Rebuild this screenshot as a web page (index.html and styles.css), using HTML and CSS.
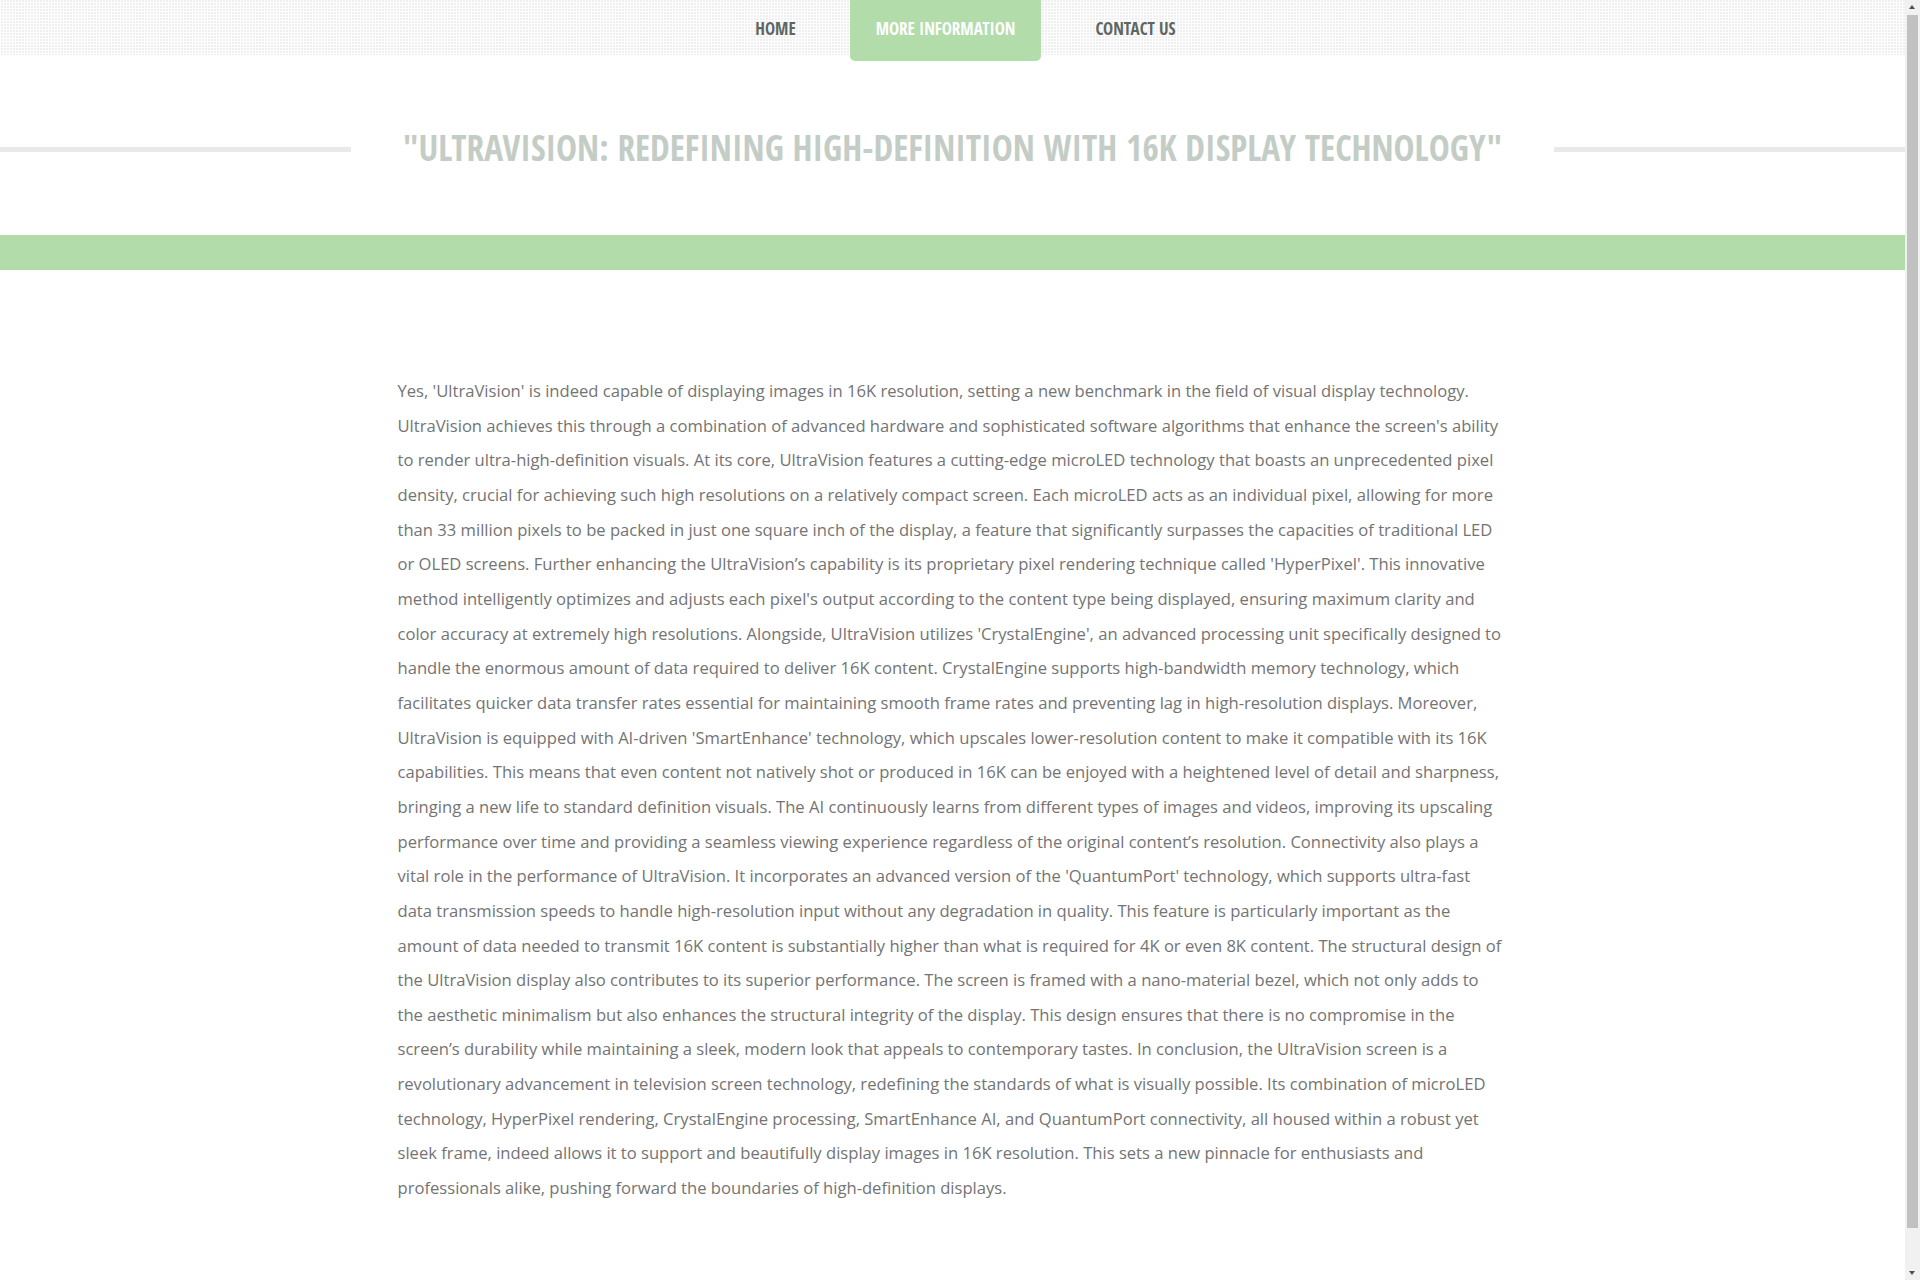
FILE: index.html
```html
<!DOCTYPE html>
<html lang="en">
<head>
<meta charset="utf-8">
<title>UltraVision</title>
<link rel="stylesheet" href="styles.css">
</head>
<body>
<div class="page">
  <header class="topbar">
    <nav class="menu">
      <a class="menu-item" href="#">Home</a>
      <a class="menu-item is-active" href="#">More Information</a>
      <a class="menu-item" href="#">Contact Us</a>
    </nav>
  </header>

  <section class="headline">
    <span class="headline-rule"></span>
    <h1 class="headline-title">"UltraVision: Redefining High-Definition with 16K Display Technology"</h1>
    <span class="headline-rule"></span>
  </section>

  <div class="band"></div>

  <main class="content">
    <p class="article">Yes, 'UltraVision' is indeed capable of displaying images in 16K resolution, setting a new benchmark in the field of visual display technology. UltraVision achieves this through a combination of advanced hardware and sophisticated software algorithms that enhance the screen's ability to render ultra-high-definition visuals. At its core, UltraVision features a cutting-edge microLED technology that boasts an unprecedented pixel density, crucial for achieving such high resolutions on a relatively compact screen. Each microLED acts as an individual pixel, allowing for more than 33 million pixels to be packed in just one square inch of the display, a feature that significantly surpasses the capacities of traditional LED or OLED screens. Further enhancing the UltraVision’s capability is its proprietary pixel rendering technique called 'HyperPixel'. This innovative method intelligently optimizes and adjusts each pixel's output according to the content type being displayed, ensuring maximum clarity and color accuracy at extremely high resolutions. Alongside, UltraVision utilizes 'CrystalEngine', an advanced processing unit specifically designed to handle the enormous amount of data required to deliver 16K content. CrystalEngine supports high-bandwidth memory technology, which facilitates quicker data transfer rates essential for maintaining smooth frame rates and preventing lag in high-resolution displays. Moreover, UltraVision is equipped with AI-driven 'SmartEnhance' technology, which upscales lower-resolution content to make it compatible with its 16K capabilities. This means that even content not natively shot or produced in 16K can be enjoyed with a heightened level of detail and sharpness, bringing a new life to standard definition visuals. The AI continuously learns from different types of images and videos, improving its upscaling performance over time and providing a seamless viewing experience regardless of the original content’s resolution. Connectivity also plays a vital role in the performance of UltraVision. It incorporates an advanced version of the 'QuantumPort' technology, which supports ultra-fast data transmission speeds to handle high-resolution input without any degradation in quality. This feature is particularly important as the amount of data needed to transmit 16K content is substantially higher than what is required for 4K or even 8K content. The structural design of the UltraVision display also contributes to its superior performance. The screen is framed with a nano-material bezel, which not only adds to the aesthetic minimalism but also enhances the structural integrity of the display. This design ensures that there is no compromise in the screen’s durability while maintaining a sleek, modern look that appeals to contemporary tastes. In conclusion, the UltraVision screen is a revolutionary advancement in television screen technology, redefining the standards of what is visually possible. Its combination of microLED technology, HyperPixel rendering, CrystalEngine processing, SmartEnhance AI, and QuantumPort connectivity, all housed within a robust yet sleek frame, indeed allows it to support and beautifully display images in 16K resolution. This sets a new pinnacle for enthusiasts and professionals alike, pushing forward the boundaries of high-definition displays.</p>
  </main>
</div>

<div class="scrollbar" aria-hidden="true">
  <span class="scrollbar-arrow scrollbar-arrow--up"></span>
  <span class="scrollbar-thumb"></span>
  <span class="scrollbar-arrow scrollbar-arrow--down"></span>
</div>
</body>
</html>
```

FILE: styles.css
```css
html, body {
  margin: 0;
  padding: 0;
  background: #ffffff;
}

body {
  font-family: "Open Sans", "Liberation Sans", sans-serif;
  color: #747474;
}

.page {
  margin-right: 15px;
}

.topbar {
  height: 55px;
  background-color: #efefef;
  background-image:
    linear-gradient(90deg, #ffffff 1px, transparent 1px),
    linear-gradient(0deg, #ffffff 1px, transparent 1px);
  background-size: 3px 3px;
}

.menu {
  display: flex;
  justify-content: center;
  align-items: flex-start;
  gap: 28px;
  padding-left: 26px;
}

.menu-item {
  display: block;
  height: 61px;
  box-sizing: border-box;
  padding: 17px 26px 0;
  font-family: "Open Sans Condensed", "Open Sans", sans-serif;
  font-stretch: 75%;
  font-weight: 700;
  font-size: 17px;
  line-height: 24px;
  text-transform: uppercase;
  text-decoration: none;
  color: #5f6661;
  border-radius: 0 0 5px 5px;
}

.menu-item.is-active {
  background: #b2dcaa;
  color: #ffffff;
}

.headline {
  display: flex;
  align-items: center;
  margin-top: 67px;
  height: 50px;
}

.headline-rule {
  flex: 1;
  height: 5px;
  background: #e8eae8;
  margin-top: 4px;
}

.headline-title {
  margin: 0;
  padding: 0 52px;
  font-family: "Open Sans Condensed", "Open Sans", sans-serif;
  font-stretch: 75%;
  font-weight: 700;
  font-size: 35.3px;
  line-height: 50px;
  text-transform: uppercase;
  color: #c3cdc6;
  white-space: nowrap;
}

.band {
  height: 35px;
  margin-top: 63px;
  background: #b2dcaa;
}

.content {
  width: 1110px;
  margin: 104px auto 0;
  padding-bottom: 118px;
}

.article {
  margin: 0;
  font-size: 16.6px;
  line-height: 34.66px;
  color: #747474;
}

/* imitation of the browser's vertical scrollbar */
.scrollbar {
  position: fixed;
  top: 0;
  right: 0;
  bottom: 0;
  width: 15px;
  background: #f1f1f1;
  display: flex;
  flex-direction: column;
}

.scrollbar-arrow {
  flex: 0 0 15px;
  position: relative;
}

.scrollbar-arrow::before {
  content: "";
  position: absolute;
  left: 4px;
  top: 5px;
  width: 0;
  height: 0;
  border-left: 3.5px solid transparent;
  border-right: 3.5px solid transparent;
}

.scrollbar-arrow--up::before {
  border-bottom: 4px solid #505050;
}

.scrollbar-arrow--down::before {
  top: 6px;
  border-top: 4px solid #505050;
}

.scrollbar-thumb {
  height: 1213px;
  margin: 0 2px;
  background: #c1c1c1;
}

.scrollbar-thumb + .scrollbar-arrow {
  margin-top: auto;
}
```
